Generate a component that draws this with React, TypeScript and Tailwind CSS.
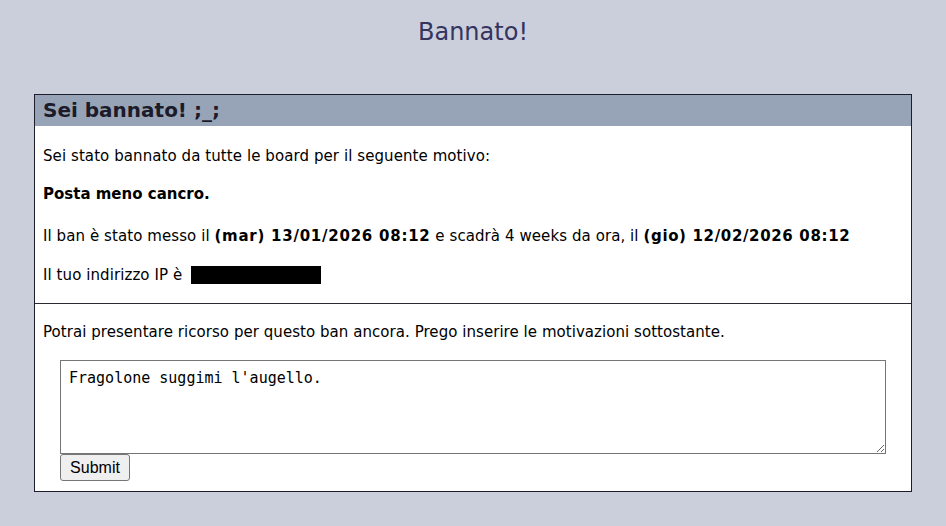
export default function App() {
  return (
    <div className="min-h-[526px] bg-[#cbcfdb] pt-[16px] pb-[34px] font-['DejaVu_Sans',Verdana,sans-serif] text-[15px] text-black">
      <h1 className="text-center text-[24px] leading-[32px] text-[#34345f]">Bannato!</h1>

      <div className="mx-[34px] mt-[46px] border border-[#1e1e2a] bg-white">
        <div className="h-[31px] bg-[#97a4b7] px-[8px] text-[20px] font-bold leading-[31px] text-[#1b1b2a]">
          Sei bannato! ;_;
        </div>

        <div className="px-[8px] pb-[19px] pt-[21px] leading-[18px] tracking-[0.08px]">
          <p>Sei stato bannato da tutte le board per il seguente motivo:</p>
          <p className="mt-[20px] font-bold tracking-normal">Posta meno cancro.</p>
          <p className="mt-[24px]">
            Il ban è stato messo il <b className="tracking-[0.75px]">(mar) 13/01/2026 08:12</b> e scadrà 4 weeks da ora, il{" "}
            <b className="tracking-[0.65px]">(gio) 12/02/2026 08:12</b>
          </p>
          <p className="mt-[21px] flex items-center">
            Il tuo indirizzo IP è
            <span className="ml-[9px] inline-block h-[18px] w-[130px] bg-black" />
          </p>
        </div>

        <div className="border-t border-[#2a2a33] px-[8px] pb-[10px] pt-[19px]">
          <p className="leading-[18px] tracking-[0.05px]">
            Potrai presentare ricorso per questo ban ancora. Prego inserire le motivazioni sottostante.
          </p>
          <div className="mt-[19px] px-[17px]">
            <textarea
              defaultValue="Fragolone suggimi l'augello."
              className="block h-[94px] w-full resize border border-[#767676] px-[8px] py-[7px] font-['DejaVu_Sans_Mono',monospace] text-[15px] leading-[20px] text-black outline-none"
            />
            <button
              type="submit"
              className="block h-[27px] w-[70px] rounded-[3px] border border-[#767676] bg-[#efefef] font-['Liberation_Sans',Arial,sans-serif] text-[16px] text-black"
            >
              Submit
            </button>
          </div>
        </div>
      </div>
    </div>
  );
}
